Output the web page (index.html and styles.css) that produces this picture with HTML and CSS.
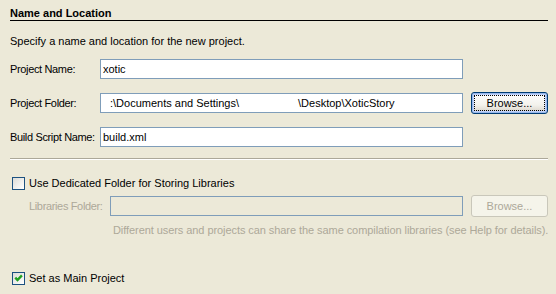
FILE: index.html
```html
<!DOCTYPE html>
<html lang="en">
<head>
    <meta charset="UTF-8">
    <title>Name and Location</title>
    <link rel="stylesheet" href="styles.css">
</head>
<body>
    <div class="panel">
        <h2 class="section-title">Name and Location</h2>
        <p class="intro">Specify a name and location for the new project.</p>

        <div class="form-grid">
            <label class="label" for="projectName">Project Name:</label>
            <input class="field" type="text" id="projectName" value="xotic">

            <label class="label" for="projectFolder">Project Folder:</label>
            <div class="field folder-field" id="projectFolder"><span class="blank-lead"></span>:\Documents and Settings\<span class="blank-user"></span>\Desktop\XoticStory</div>
            <button class="btn btn-focus" type="button">Browse...</button>

            <label class="label" for="buildScript">Build Script Name:</label>
            <input class="field" type="text" id="buildScript" value="build.xml">
        </div>

        <div class="separator"></div>

        <label class="check-row">
            <span class="checkbox"></span>
            <span>Use Dedicated Folder for Storing Libraries</span>
        </label>

        <div class="libs-row">
            <label class="label disabled" for="libsFolder">Libraries Folder:</label>
            <input class="field field-disabled" type="text" id="libsFolder" disabled>
            <button class="btn" type="button" disabled>Browse...</button>
        </div>

        <p class="hint">Different users and projects can share the same compilation libraries (see Help for details).</p>

        <label class="check-row main-project">
            <span class="checkbox">
                <svg width="11" height="11" viewBox="0 0 11 11">
                    <path d="M2.3 4.6 L4.5 7 L8.9 2.4" fill="none" stroke="#21a121" stroke-width="2.4"/>
                </svg>
            </span>
            <span>Set as Main Project</span>
        </label>
    </div>
</body>
</html>
```

FILE: styles.css
```css
* {
    margin: 0;
    padding: 0;
    box-sizing: border-box;
}

body {
    font-family: "Liberation Sans", Arial, sans-serif;
    font-size: 11px;
    line-height: 14px;
    color: #000;
    background-color: #ece9d8;
    width: 556px;
    height: 294px;
    overflow: hidden;
}

.panel {
    padding: 6px 8px 0 10px;
}

.section-title {
    font-size: 11px;
    font-weight: bold;
    line-height: 14px;
    border-bottom: 1px solid #000;
}

.intro {
    margin-top: 13px;
}

.label {
    white-space: nowrap;
    letter-spacing: -0.35px;
}

/* label | field | button */
.form-grid {
    display: grid;
    grid-template-columns: 82px 1fr 77px;
    column-gap: 8px;
    row-gap: 13px;
    align-items: center;
    margin-top: 11px;
}

.form-grid .label {
    grid-column: 1;
}

.form-grid .field {
    grid-column: 2;
}

.field {
    height: 20px;
    border: 1px solid #7f9db9;
    background: #fff;
    font-family: inherit;
    font-size: 11px;
    color: #000;
    padding: 0 2px;
    outline: none;
    line-height: 18px;
}

.folder-field {
    white-space: nowrap;
    overflow: hidden;
}

.blank-lead {
    display: inline-block;
    width: 7px;
}

.blank-user {
    display: inline-block;
    width: 59px;
}

.btn {
    height: 22px;
    font-family: inherit;
    font-size: 11px;
    color: #000;
    border: 1px solid #003c74;
    border-radius: 3px;
    background: linear-gradient(#ffffff, #f3f2ec 60%, #d6d0c5);
}

.btn-focus {
    box-shadow: inset 0 0 0 1px #98b8ea, inset 0 0 0 2px #c1d3fb;
    outline: 1px dotted #000;
    outline-offset: -4px;
}

.btn:disabled {
    color: #aca899;
    border-color: #c9c7ba;
    background: #f5f4ea;
}

.separator {
    margin-top: 11px;
    border-top: 1px solid #aca899;
    border-bottom: 1px solid #fff;
}

.check-row {
    display: flex;
    align-items: center;
    gap: 4px;
    margin-top: 16px;
    padding-left: 2px;
}

.checkbox {
    width: 13px;
    height: 13px;
    border: 1px solid #1c5180;
    background: linear-gradient(135deg, #dcdcd7, #ffffff);
    display: flex;
    align-items: center;
    justify-content: center;
}

.libs-row {
    display: grid;
    grid-template-columns: 73px 1fr 77px;
    column-gap: 8px;
    align-items: center;
    margin-top: 5px;
    padding-left: 19px;
}

.disabled {
    color: #aca899;
}

.field-disabled {
    background: #ece9d8;
}

.hint {
    color: #aca899;
    margin-top: 6px;
    padding-left: 103px;
    white-space: nowrap;
    letter-spacing: -0.07px;
}

.main-project {
    margin-top: 34px;
}
```
